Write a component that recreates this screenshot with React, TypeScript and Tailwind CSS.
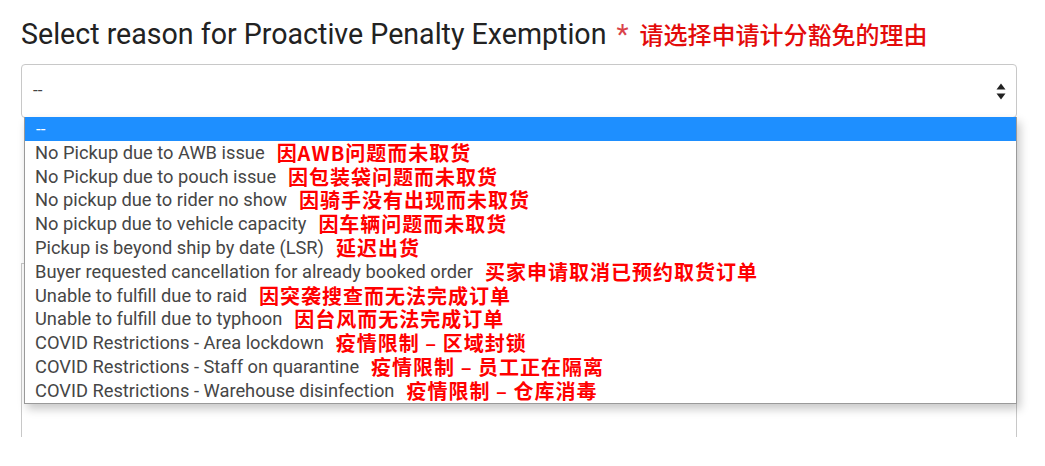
import React from "react";

type Reason = {
  en: string;
  zh: string;
};

const reasons: Reason[] = [
  { en: "No Pickup due to AWB issue", zh: "因AWB问题而未取货" },
  { en: "No Pickup due to pouch issue", zh: "因包装袋问题而未取货" },
  { en: "No pickup due to rider no show", zh: "因骑手没有出现而未取货" },
  { en: "No pickup due to vehicle capacity", zh: "因车辆问题而未取货" },
  { en: "Pickup is beyond ship by date (LSR)", zh: "延迟出货" },
  { en: "Buyer requested cancellation for already booked order", zh: "买家申请取消已预约取货订单" },
  { en: "Unable to fulfill due to raid", zh: "因突袭搜查而无法完成订单" },
  { en: "Unable to fulfill due to typhoon", zh: "因台风而无法完成订单" },
  { en: "COVID Restrictions - Area lockdown", zh: "疫情限制 – 区域封锁" },
  { en: "COVID Restrictions - Staff on quarantine", zh: "疫情限制 – 员工正在隔离" },
  { en: "COVID Restrictions - Warehouse disinfection", zh: "疫情限制 – 仓库消毒" },
];

function SortArrows() {
  return (
    <svg width="10" height="17" viewBox="0 0 10 17" className="text-[#222]">
      <path d="M5 0.5 L9.5 6.5 H0.5 Z" fill="currentColor" />
      <path d="M5 16.5 L9.5 10.5 H0.5 Z" fill="currentColor" />
    </svg>
  );
}

export default function App() {
  return (
    <div className="min-h-screen bg-white pl-[21px] pt-[16px] font-['Roboto',sans-serif]">
      <div className="w-[996px]">
        <div className="flex items-baseline h-[36px]">
          <span className="text-[28.6px] leading-[36px] text-[#222]">
            Select reason for Proactive Penalty Exemption
          </span>
          <span className="ml-[10px] text-[28px] leading-[36px] text-[#d9434a]">*</span>
          <span className="ml-[11px] text-[24px] leading-[36px] font-medium text-[#e30b0b] font-['Noto_Sans_CJK_SC',sans-serif]">
            请选择申请计分豁免的理由
          </span>
        </div>

        <div className="relative mt-[12px]">
          <div className="flex h-[54px] items-center justify-between rounded-[4px] border border-[#c8c8c8] bg-white pl-[11px] pr-[10px]">
            <span className="text-[17px] text-[#444]">--</span>
            <SortArrows />
          </div>

          <ul className="absolute left-[3px] top-[53px] z-10 w-[993px] border border-t-0 border-[#9a9a9a] bg-white shadow-[3px_5px_9px_rgba(0,0,0,0.22)]">
            <li className="flex h-[24px] items-center bg-[#1e8fff] pl-[11px] text-[17px] leading-none text-white">
              --
            </li>
            {reasons.map((r) => (
              <li key={r.en} className="flex h-[23.8px] items-center whitespace-nowrap pl-[10px]">
                <span className="text-[18.3px] leading-none text-[#464646]">{r.en}</span>
                <span className="ml-[12px] text-[20px] leading-none font-bold tracking-[1px] text-[#f00] font-['Noto_Sans_CJK_SC',sans-serif]">
                  {r.zh}
                </span>
              </li>
            ))}
          </ul>
        </div>

        <div className="mt-[145px] h-[174px] border border-b-0 border-[#c8c8c8]" />
      </div>
    </div>
  );
}
